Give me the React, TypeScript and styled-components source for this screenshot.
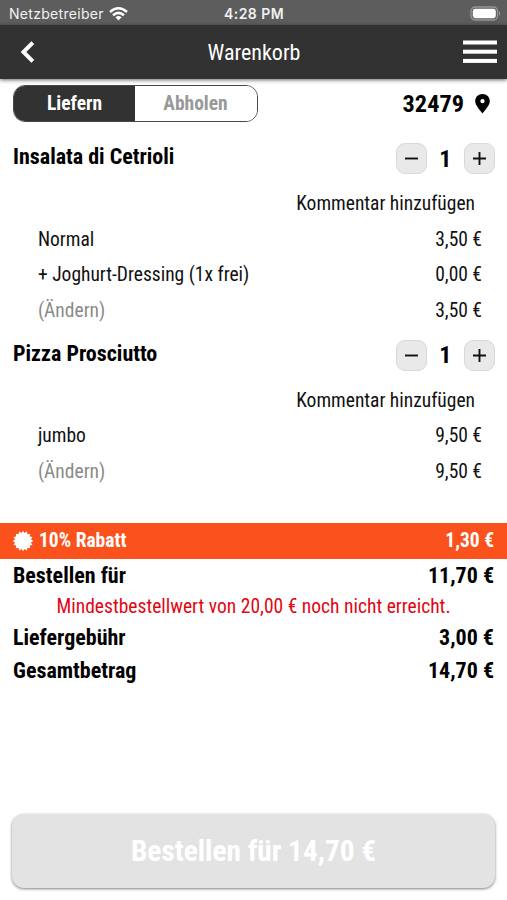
import React from "react";
import styled, { createGlobalStyle } from "styled-components";

const GlobalStyle = createGlobalStyle`
  * { box-sizing: border-box; }
  html, body { margin: 0; padding: 0; background: #fff; }
  body { font-family: "Roboto Condensed", Roboto, sans-serif; font-stretch: 75%; color: #000; }
  button { font: inherit; color: inherit; border: 0; padding: 0; background: none; font-stretch: inherit; }
`;

const Screen = styled.div`
  width: 507px;
  height: 900px;
  display: flex;
  flex-direction: column;
  background: #fff;
  overflow: hidden;
`;

const StatusBar = styled.div`
  height: 25px;
  flex: none;
  display: grid;
  grid-template-columns: 1fr auto 1fr;
  align-items: center;
  padding: 2px 6px 0 9px;
  background: #5d5d5d;
  color: #f1f1f1;
  font-family: Inter, sans-serif;
  font-stretch: 100%;
  font-size: 14px;
`;

const Carrier = styled.div`
  display: flex;
  align-items: center;
  gap: 5px;
  letter-spacing: 0.3px;
`;

const Clock = styled.div`
  font-weight: 600;
  letter-spacing: 0.45px;
  margin-right: 2px;
`;

const BatterySlot = styled.div`
  display: flex;
  justify-content: flex-end;
`;

const Header = styled.header`
  height: 54px;
  flex: none;
  display: grid;
  grid-template-columns: 1fr auto 1fr;
  align-items: center;
  padding: 0 10px 0 20px;
  background: #323232;
  color: #fff;
  box-shadow: 0 1px 4px rgba(0, 0, 0, 0.6);
`;

const Title = styled.h1`
  margin: 0 9px 0 0;
  font-size: 22px;
  font-weight: 400;
`;

const HeaderButton = styled.button<{ $end?: boolean }>`
  display: flex;
  justify-content: ${(p) => (p.$end ? "flex-end" : "flex-start")};
`;

const Options = styled.div`
  height: 52.5px;
  flex: none;
  display: flex;
  justify-content: space-between;
  align-items: flex-start;
  padding: 6px 17px 0 13px;
`;

const Toggle = styled.div`
  width: 245px;
  height: 37px;
  display: flex;
  border: 1px solid #484848;
  border-radius: 12px;
  overflow: hidden;
`;

const ToggleOption = styled.button<{ $active?: boolean }>`
  flex: ${(p) => (p.$active ? "0 0 121px" : "1")};
  padding-right: ${(p) => (p.$active ? "0" : "1px")};
  font-size: 19.5px;
  font-weight: 700;
  background: ${(p) => (p.$active ? "#323232" : "#fff")};
  color: ${(p) => (p.$active ? "#fff" : "#999")};
`;

const Location = styled.div`
  height: 37px;
  display: flex;
  align-items: center;
  gap: 11px;
  font-size: 24.3px;
  font-weight: 700;
`;

const ItemHead = styled.div`
  height: 54.3px;
  display: flex;
  justify-content: space-between;
  align-items: center;
  padding: 0 12px 0 13px;
`;

const ItemName = styled.h2`
  margin: 0 0 4px;
  font-size: 22px;
  font-weight: 700;
`;

const Stepper = styled.div`
  width: 99.5px;
  display: flex;
  justify-content: space-between;
  align-items: center;
  font-size: 24px;
  font-weight: 700;
`;

const StepButton = styled.button`
  width: 31px;
  height: 31px;
  display: grid;
  place-items: center;
  border: 1px solid #d9d9d9;
  border-radius: 9px;
  background: #e9e9e9;
`;

const Line = styled.div<{ $muted?: boolean }>`
  height: 35.6px;
  display: flex;
  justify-content: space-between;
  align-items: center;
  padding: 0 25px 0 38px;
  font-size: 19.5px;
  color: #111;

  span:first-child { color: ${(p) => (p.$muted ? "#8a8a8a" : "inherit")}; }
`;

const Comment = styled(Line)`
  justify-content: flex-end;
  padding-right: 32px;
`;

const Discount = styled.div`
  height: 36px;
  flex: none;
  margin-top: 33.7px;
  display: flex;
  align-items: center;
  padding: 0 13px;
  gap: 6px;
  background: #fb511c;
  color: #fff;
  font-size: 19.5px;
  font-weight: 700;
`;

const Amount = styled.span`
  margin-left: auto;
`;

const Total = styled.div`
  height: 33px;
  flex: none;
  display: flex;
  align-items: center;
  padding: 0 13px;
  font-size: 22px;
  font-weight: 700;
`;

const Warning = styled.p`
  margin: 0;
  height: 29px;
  flex: none;
  display: flex;
  align-items: center;
  justify-content: center;
  font-size: 19.55px;
  color: #df0714;
`;

const OrderButton = styled.button`
  margin: auto 12px 12.5px;
  height: 73.5px;
  flex: none;
  border-radius: 12px;
  background: #e3e3e3;
  color: #fff;
  font-size: 29.3px;
  font-weight: 700;
  box-shadow: 0 1px 3px rgba(0, 0, 0, 0.5);
`;

const WifiIcon = () => (
  <svg width="19" height="14" viewBox="0 0 19 14" fill="none" stroke="#fff" strokeWidth="2.5">
    <path d="M1 5 Q9.500 -2.400 18 5" />
    <path d="M4 8.300 Q9.500 3.500 15 8.300" />
    <path d="M6.500 10.300 Q9.500 7.800 12.500 10.300 L9.500 13.400 Z" fill="#fff" stroke="none" />
  </svg>
);

const BatteryIcon = () => (
  <svg width="31" height="15" viewBox="0 0 31 15">
    <rect x="1" y="1" width="26.500" height="13" rx="4" fill="none" stroke="#969696" strokeWidth="1.300" />
    <rect x="2.800" y="2.800" width="23" height="9.400" rx="2.400" fill="#fff" />
    <path d="M29 5 Q31 7.500 29 10 Z" fill="#a5a5a5" />
  </svg>
);

const BackIcon = () => (
  <svg width="15" height="22" viewBox="0 0 15 22" fill="none" stroke="#fff" strokeWidth="4">
    <path d="M12.800 1.700 L3.500 11 L12.800 20.300" />
  </svg>
);

const MenuIcon = () => (
  <svg width="34" height="24" viewBox="0 0 34 24" fill="#fff">
    <rect y="0.500" width="34" height="4" />
    <rect y="9.700" width="34" height="4" />
    <rect y="18.900" width="34" height="4" />
  </svg>
);

const PinIcon = () => (
  <svg width="15" height="20" viewBox="0 0 15 20">
    <path
      fillRule="evenodd"
      d="M7.500 0C3.300 0 0.200 3.100 0.200 7.100C0.200 11.500 4.500 15.500 7.500 19.600C10.500 15.500 14.800 11.500 14.800 7.100C14.800 3.100 11.700 0 7.500 0ZM7.500 5A2.150 2.150 0 1 1 7.500 9.300A2.150 2.150 0 1 1 7.500 5Z"
    />
  </svg>
);

const StepIcon = ({ plus }: { plus?: boolean }) => (
  <svg width="15" height="15" viewBox="0 0 15 15" stroke="#111" strokeWidth="1.900">
    <path d={plus ? "M1 7.500H14M7.500 1V14" : "M1 7.500H14"} />
  </svg>
);

const burst = Array.from({ length: 32 }, (_, i) => {
  const radius = i % 2 ? 8.1 : 10.2;
  const angle = (i * Math.PI) / 16;
  return `${10 + radius * Math.cos(angle)},${10 + radius * Math.sin(angle)}`;
}).join(" ");

const BadgeIcon = () => (
  <svg width="20" height="20" viewBox="0 0 20 20" fill="#fff">
    <polygon points={burst} />
  </svg>
);

type Row = { label: string; price: string; muted?: boolean };

const items: { name: string; rows: Row[] }[] = [
  {
    name: "Insalata di Cetrioli",
    rows: [
      { label: "Normal", price: "3,50 €" },
      { label: "+ Joghurt-Dressing (1x frei)", price: "0,00 €" },
      { label: "(Ändern)", price: "3,50 €", muted: true },
    ],
  },
  {
    name: "Pizza Prosciutto",
    rows: [
      { label: "jumbo", price: "9,50 €" },
      { label: "(Ändern)", price: "9,50 €", muted: true },
    ],
  },
];

export default function App() {
  return (
    <Screen>
      <GlobalStyle />
      <StatusBar>
        <Carrier>Netzbetreiber<WifiIcon /></Carrier>
        <Clock>4:28 PM</Clock>
        <BatterySlot><BatteryIcon /></BatterySlot>
      </StatusBar>
      <Header>
        <HeaderButton aria-label="Zurück"><BackIcon /></HeaderButton>
        <Title>Warenkorb</Title>
        <HeaderButton $end aria-label="Menü"><MenuIcon /></HeaderButton>
      </Header>
      <Options>
        <Toggle>
          <ToggleOption $active>Liefern</ToggleOption>
          <ToggleOption>Abholen</ToggleOption>
        </Toggle>
        <Location>32479<PinIcon /></Location>
      </Options>
      {items.map((item) => (
        <section key={item.name}>
          <ItemHead>
            <ItemName>{item.name}</ItemName>
            <Stepper>
              <StepButton aria-label="Weniger"><StepIcon /></StepButton>
              <span>1</span>
              <StepButton aria-label="Mehr"><StepIcon plus /></StepButton>
            </Stepper>
          </ItemHead>
          <Comment><span>Kommentar hinzufügen</span></Comment>
          {item.rows.map((row) => (
            <Line key={row.label} $muted={row.muted}>
              <span>{row.label}</span>
              <span>{row.price}</span>
            </Line>
          ))}
        </section>
      ))}
      <Discount><BadgeIcon /><span>10% Rabatt</span><Amount>1,30 €</Amount></Discount>
      <Total><span>Bestellen für</span><Amount>11,70 €</Amount></Total>
      <Warning>Mindestbestellwert von 20,00 € noch nicht erreicht.</Warning>
      <Total><span>Liefergebühr</span><Amount>3,00 €</Amount></Total>
      <Total><span>Gesamtbetrag</span><Amount>14,70 €</Amount></Total>
      <OrderButton>Bestellen für 14,70 €</OrderButton>
    </Screen>
  );
}
